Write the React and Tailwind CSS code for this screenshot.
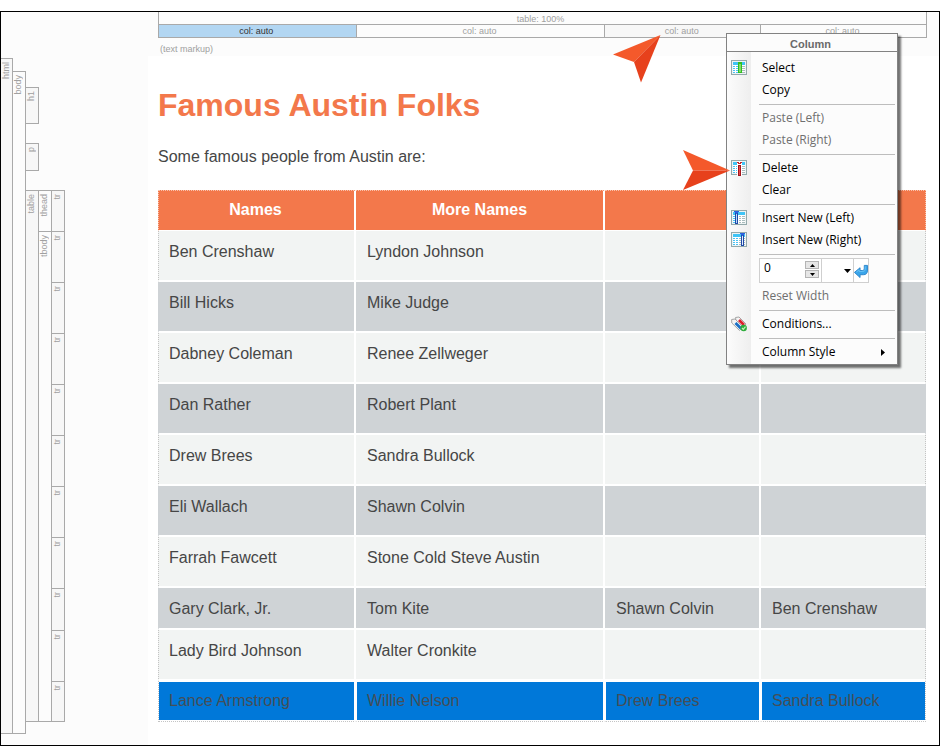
import React from 'react'

const people = [
  ['Ben Crenshaw', 'Lyndon Johnson', '', ''],
  ['Bill Hicks', 'Mike Judge', '', ''],
  ['Dabney Coleman', 'Renee Zellweger', '', ''],
  ['Dan Rather', 'Robert Plant', '', ''],
  ['Drew Brees', 'Sandra Bullock', '', ''],
  ['Eli Wallach', 'Shawn Colvin', '', ''],
  ['Farrah Fawcett', 'Stone Cold Steve Austin', '', ''],
  ['Gary Clark, Jr.', 'Tom Kite', 'Shawn Colvin', 'Ben Crenshaw'],
  ['Lady Bird Johnson', 'Walter Cronkite', '', ''],
]

const selected = ['Lance Armstrong', 'Willie Nelson', 'Drew Brees', 'Sandra Bullock']

const bodyRows = [
  'h-[51px]',
  'h-[51px]',
  'h-[51px]',
  'h-[51px]',
  'h-[51px]',
  'h-[51px]',
  'h-[51px]',
  'h-[42px]',
  'h-[51px]',
  'h-[41px]',
]

function Tag({ children }) {
  return (
    <span className="block rotate-180 pr-px pb-[3px] text-[9px] leading-[8px] text-[#a0a0a0] [writing-mode:vertical-rl]">
      {children}
    </span>
  )
}

function Block({ label, className }) {
  return (
    <div className={`flex w-[13px] items-start border-t border-r border-[#a9a9a9] ${className}`}>
      <Tag>{label}</Tag>
    </div>
  )
}

function StructureBar() {
  return (
    <aside className="flex w-[147px] shrink-0 items-stretch bg-[#fcfcfc] pt-[46px] pb-[11px]">
      <div className="flex w-3 items-start border-t border-r border-b border-[#a9a9a9] bg-[#f7f7f7]">
        <Tag>html</Tag>
      </div>
      <div className="mt-[13px] flex w-[13px] items-start border-t border-r border-b border-[#a9a9a9]">
        <Tag>body</Tag>
      </div>
      <div className="pt-[29px]">
        <Block label="h1" className="h-[37px] border-b bg-[#f7f7f7]" />
        <Block label="p" className="mt-[19px] h-[28px] border-b bg-[#f7f7f7]" />
        <div className="mt-[19px] flex border-b border-[#a9a9a9]">
          <Block label="table" className="bg-[#f7f7f7]" />
          <div className="flex flex-col">
            <div className="flex h-[41px]">
              <Block label="thead" className="bg-[#fcfcfc]" />
              <Block label="tr" className="bg-[#f7f7f7]" />
            </div>
            <div className="flex">
              <Block label="tbody" className="bg-[#fcfcfc]" />
              <div>
                {bodyRows.map((height, i) => (
                  <Block key={i} label="tr" className={`bg-[#f7f7f7] last:h-[40px] ${height}`} />
                ))}
              </div>
            </div>
          </div>
        </div>
      </div>
    </aside>
  )
}

function ColumnBar() {
  return (
    <div className="bg-[#fcfcfc] pr-3 pl-[10px]">
      <div className="border-r border-l border-[#a9a9a9] text-center text-[9px] text-[#a0a0a0]">
        <div className="h-3 pr-1 leading-[14px]">table: 100%</div>
        <div className="grid h-[14px] grid-cols-[198fr_249fr_156fr_165fr] border-t border-b border-[#a9a9a9] leading-3">
          <div className="border-r border-[#a9a9a9] bg-[#b2d6f2] pr-0.5 text-[#333]">col: auto</div>
          <div className="border-r border-[#a9a9a9] pr-0.5">col: auto</div>
          <div className="border-r border-[#a9a9a9] bg-[#f7f7f7] pr-0.5">col: auto</div>
          <div className="pr-0.5">col: auto</div>
        </div>
      </div>
      <div className="h-[18px] pt-[5px] pl-[2px] text-[9px] leading-3 text-[#a0a0a0]">(text markup)</div>
    </div>
  )
}

function PeopleTable() {
  return (
    <table className="w-full table-fixed border-separate border-spacing-0 text-left">
      <colgroup>
        <col className="w-[198px]" />
        <col className="w-[249px]" />
        <col className="w-[156px]" />
        <col className="w-[165px]" />
      </colgroup>
      <thead>
        <tr className="h-[41px] leading-5">
          {['Names', 'More Names', '', ''].map((name, i) => (
            <th
              key={i}
              className="border-t border-r-2 border-b border-white border-t-[#f9c3ae] bg-[#f3784b] p-0 pb-0.5 text-center font-bold text-white [border-top-style:dotted] first:border-l first:border-l-[#f9c3ae] first:pr-0.5 first:[border-left-style:dotted] last:border-r last:border-r-[#f9c3ae] last:[border-right-style:dotted]"
            >
              {name}
            </th>
          ))}
        </tr>
      </thead>
      <tbody>
        {people.map((row, r) => (
          <tr key={row[0]} className={`${bodyRows[r]} ${r % 2 ? 'bg-[#cfd3d6]' : 'bg-[#f2f4f3]'}`}>
            {row.map((name, i) => (
              <td
                key={i}
                className={`border-r-2 border-b-2 border-white py-0 pt-[11px] pl-[11px] align-top leading-5 first:border-l first:pl-[10px] last:border-r first:[border-left-style:dotted] last:[border-right-style:dotted] ${
                  r % 2
                    ? 'first:border-l-[#cfd3d6] last:border-r-[#cfd3d6]'
                    : 'first:border-l-[#c4c4c4] last:border-r-[#c4c4c4]'
                }`}
              >
                {name}
              </td>
            ))}
          </tr>
        ))}
        <tr className="h-[41px]">
          {selected.map((name, i) => (
            <td
              key={i}
              className="border-r-2 border-b border-l border-white border-b-[#c4c4c4] p-0 py-px [border-bottom-style:dotted] first:border-l-[#c4c4c4] last:border-r last:border-r-[#c4c4c4] first:[border-left-style:dotted] last:[border-right-style:dotted]"
            >
              <div className="h-[38px] bg-[#0078d9] pl-[10px] leading-[38px] text-[#454e57]">{name}</div>
            </td>
          ))}
        </tr>
      </tbody>
    </table>
  )
}

function GridIcon({ children }) {
  return (
    <svg className="h-4 w-4" viewBox="0 0 16 16">
      <rect x="0.5" y="0.5" width="15" height="14" fill="#eef3f3" stroke="#93a9ab" />
      <rect x="2" y="2" width="12" height="11" fill="#fff" />
      <rect x="2" y="2" width="12" height="3" fill="#3fc4f6" />
      <path d="M2 6h2v1H2zM2 8h2v1H2zM2 10h2v1H2zM2 12h2v1H2zM5 6h2v1H5zM5 8h2v1H5zM5 10h2v1H5zM5 12h2v1H5z" fill="#48c2f3" />
      <path d="M8 6h2v1H8zM8 8h2v1H8zM8 10h2v1H8zM8 12h2v1H8zM11 6h3v1h-3zM11 8h3v1h-3zM11 10h3v1h-3zM11 12h3v1h-3z" fill="#a9bcbe" />
      {children}
    </svg>
  )
}

function SelectIcon() {
  return (
    <GridIcon>
      <rect x="7" y="2" width="4" height="11" fill="#2fbf1d" />
      <rect x="8" y="4" width="2" height="8" fill="#7edb6b" />
    </GridIcon>
  )
}

function DeleteIcon() {
  return (
    <GridIcon>
      <rect x="6" y="1" width="5" height="15" fill="#fff" />
      <rect x="7" y="5" width="3" height="11" fill="#a2161c" />
      <rect x="8" y="6" width="1" height="9" fill="#e8474b" />
      <path d="M6 2h2v1h1V2h2v1h-1v1H7V3H6z" fill="#c4262c" />
    </GridIcon>
  )
}

function InsertLeftIcon() {
  return (
    <GridIcon>
      <rect x="4.5" y="3.5" width="2" height="10" fill="#b5dcf8" stroke="#1f49a8" />
      <path d="M3 1h5v1H7v1H6v1H5V3H4V2H3z" fill="#2b5fdc" />
    </GridIcon>
  )
}

function InsertRightIcon() {
  return (
    <GridIcon>
      <rect x="10.5" y="3.5" width="2" height="10" fill="#e3eefa" stroke="#1f49a8" />
      <path d="M9 1h5v1h-1v1h-1v1h-1V3h-1V2H9z" fill="#2b5fdc" />
    </GridIcon>
  )
}

function ConditionsIcon() {
  return (
    <svg className="h-4 w-4" viewBox="0 0 16 16">
      <path d="M4.500 1.500 8 1l7 7-3 3.500-7-7z" fill="#f4f4f4" stroke="#a6a6a6" />
      <path d="M8 4 13 9" stroke="#dc1f2c" strokeWidth="2.800" />
      <path d="M.6 3.500 4 3l8 8-3.500 3.500L.8 7z" fill="#f4f4f4" stroke="#a6a6a6" />
      <path d="M4.500 7 10 12.500" stroke="#1a6fc4" strokeWidth="2.800" />
      <circle cx="12.700" cy="12" r="3.200" fill="#2bab3a" />
      <path d="m11 12 1.300 1.400 2.200-2.700" fill="none" stroke="#c8f2c0" strokeWidth="1.200" />
    </svg>
  )
}

function MenuItem({ icon, label, disabled, submenu }) {
  return (
    <button
      type="button"
      disabled={disabled}
      className="flex h-[22px] w-full items-center text-left text-black disabled:text-[#6f6f6f]"
    >
      <span className="w-[35px] shrink-0 pl-1">{icon}</span>
      <span className="flex-1 whitespace-nowrap">{label}</span>
      {submenu && (
        <svg className="mr-3 h-[7px] w-1" viewBox="0 0 4 7">
          <path d="M0 0v7l4-3.500z" />
        </svg>
      )}
    </button>
  )
}

function Separator() {
  return <div className="mt-[3px] mr-0.5 mb-[2px] ml-8 h-px bg-[#bdbdbd]" />
}

function WidthRow() {
  return (
    <div className="ml-8 flex h-7 items-start pt-px">
      <div className="flex h-[25px] w-[110px] border border-[#cfcfcf] bg-white">
        <input
          type="text"
          aria-label="Column width"
          defaultValue="0"
          className="h-[18px] w-[45px] pl-1 text-black outline-none"
        />
        <div className="flex w-[16px] flex-col gap-px pt-[2px] pr-[2px]">
          <button type="button" aria-label="Increase" className="flex h-2 items-center justify-center border border-[#b4b4b4] bg-[#e6e6e6]">
            <svg className="h-[3px] w-[5px]" viewBox="0 0 5 3">
              <path d="M0 3h5L2.500 0z" />
            </svg>
          </button>
          <button type="button" aria-label="Decrease" className="flex h-2 items-center justify-center border border-[#b4b4b4] bg-[#e6e6e6]">
            <svg className="h-[3px] w-[5px]" viewBox="0 0 5 3">
              <path d="M0 0h5L2.500 3z" />
            </svg>
          </button>
        </div>
        <div className="relative w-[33px] border-r border-l border-[#cfcfcf]">
          <select aria-label="Unit" className="h-full w-full appearance-none outline-none" />
          <svg className="pointer-events-none absolute top-[10px] right-[2px] h-1 w-[7px]" viewBox="0 0 7 4">
            <path d="M0 0h7L3.500 4z" />
          </svg>
        </div>
        <button type="button" aria-label="Apply width" className="flex-1">
          <svg className="h-[14px] w-[14px]" viewBox="0 0 15 15">
            <path
              d="M.5 9 6.500 4v3h2.500c1.500 0 2-1 2-2.500V1.500h3.500V6.500c0 3.500-1.500 5-4.500 5h-3.500v3z"
              fill="#3aa5ea"
              stroke="#2b83c9"
            />
            <path d="M2.500 8.800 5.500 6.300V8h4c1.500 0 2.500-1 2.500-2.500V2.500" fill="none" stroke="#6cc4f5" />
          </svg>
        </button>
      </div>
    </div>
  )
}

function ColumnMenu() {
  return (
    <div className="absolute top-[21px] right-[41px] w-[172px] border border-[#828282] bg-[#fcfcfc] font-['Open_Sans',sans-serif] text-[12px] shadow-[3px_3px_2px_#0000008c]">
      <div className="h-[18px] border-b border-[#828282] pr-[3px] text-center font-['Liberation_Sans',Arial,sans-serif] text-[11px] leading-[20px] font-bold text-[#6a6a6a]">
        Column
      </div>
      <div className="bg-[linear-gradient(to_right,#fcfcfc,#eeeeee)] bg-[length:24px_100%] bg-no-repeat pt-[5px] pb-px">
        <MenuItem icon={<SelectIcon />} label="Select" />
        <MenuItem label="Copy" />
        <Separator />
        <MenuItem label="Paste (Left)" disabled />
        <MenuItem label="Paste (Right)" disabled />
        <Separator />
        <MenuItem icon={<DeleteIcon />} label="Delete" />
        <MenuItem label="Clear" />
        <Separator />
        <MenuItem icon={<InsertLeftIcon />} label="Insert New (Left)" />
        <MenuItem icon={<InsertRightIcon />} label="Insert New (Right)" />
        <Separator />
        <WidthRow />
        <MenuItem label="Reset Width" disabled />
        <Separator />
        <MenuItem icon={<ConditionsIcon />} label="Conditions..." />
        <Separator />
        <MenuItem label="Column Style" submenu />
      </div>
    </div>
  )
}

function Pointers() {
  return (
    <>
      <svg className="absolute top-[22px] right-[277px] h-[50px] w-[50px]" viewBox="0 0 50 50">
        <path d="M1 20.500 48.500 1 22 28z" fill="#f4592b" />
        <path d="M48.500 1 29 48.500 22 28z" fill="#e7411c" />
      </svg>
      <svg className="absolute top-[137px] right-[208px] h-[42px] w-[50px]" viewBox="0 0 50 42">
        <path d="M2 1 49 21.500H12z" fill="#f4592b" />
        <path d="M2 41 49 21.500H12z" fill="#e7411c" />
      </svg>
    </>
  )
}

export default function App() {
  return (
    <div className="bg-white pt-[11px] font-['Liberation_Sans',Arial,sans-serif]">
      <div className="relative flex border border-black">
        <StructureBar />
        <main className="min-w-0 flex-1 pb-[23px]">
          <ColumnBar />
          <div className="pr-[13px] pl-[10px] text-[16px] text-[#464646]">
            <h1 className="pt-[29px] text-[32px] leading-10 font-bold text-[#f3784b]">Famous Austin Folks</h1>
            <p className="pt-[22px] pb-[23px] leading-5">Some famous people from Austin are:</p>
            <PeopleTable />
          </div>
        </main>
        <ColumnMenu />
        <Pointers />
      </div>
    </div>
  )
}
